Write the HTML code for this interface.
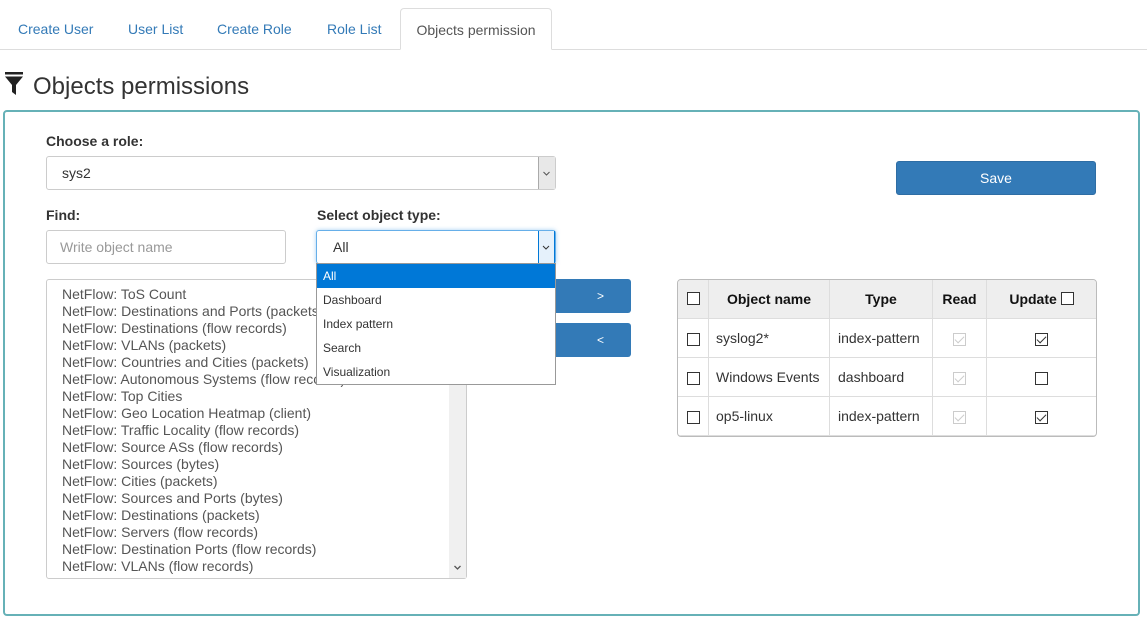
<!DOCTYPE html>
<html><head><style>
*{box-sizing:border-box;margin:0;padding:0}
body{width:1147px;height:623px;background:#fff;font-family:"Liberation Sans",Arial,sans-serif;font-size:14px;color:#333;position:relative;overflow:hidden}
.a{position:absolute}
.tab{position:absolute;top:21px;color:#337ab7;font-size:14px}
.lbl{position:absolute;font-weight:bold;font-size:14px;color:#333}
.cb{display:inline-block;width:13px;height:13px;border:1px solid #333;background:#fff;vertical-align:middle;position:relative}
.cb.g{border-color:#ccc}
.ck::after{content:"";position:absolute;left:3px;top:0px;width:4px;height:8px;border:solid #333;border-width:0 1px 1px 0;transform:rotate(45deg)}
.g.ck::after{border-color:#ccc}
table{border-collapse:collapse}
td,th{border:1px solid #ddd;height:39px;font-size:14px}
th{background:#eee;font-weight:bold;color:#111}
.list div{height:17px;line-height:17px}
.dd div{height:24px;line-height:24px;padding-left:6px;font-size:12px;color:#333}
</style></head><body>
<div class="a" style="left:0;top:49px;width:1147px;height:1px;background:#ddd"></div>
<div class="tab" style="left:18px">Create User</div>
<div class="tab" style="left:128px">User List</div>
<div class="tab" style="left:217px">Create Role</div>
<div class="tab" style="left:327px">Role List</div>
<div class="a" style="left:400px;top:8px;width:152px;height:42px;border:1px solid #ddd;border-bottom-color:#fff;border-radius:4px 4px 0 0;background:#fff;color:#555;text-align:center;line-height:42px">Objects permission</div>
<svg class="a" style="left:4px;top:72px" width="20" height="24" viewBox="0 0 20 24"><rect x="1" y="0" width="18" height="2.5" fill="#222"/><path d="M1 4.5H19L12 13V23L8 20V13Z" fill="#222"/></svg>
<div class="a" style="left:33px;top:73px;font-size:24px;color:#333">Objects permissions</div>
<div class="a" style="left:3px;top:110px;width:1137px;height:506px;border:2px solid #66b1b7;border-radius:4px"></div>
<div class="lbl" style="left:46px;top:133px">Choose a role:</div>
<div class="a" style="left:46px;top:156px;width:510px;height:34px;border:1px solid #ccc;border-radius:3px;padding-left:15px;line-height:32px">sys2</div>
<div class="a" style="left:538px;top:157px;width:17px;height:32px;background:#e8e8e8;border-left:1px solid #aaa"><svg width="16" height="32"><path d="M4.5 15l3 3 3-3" fill="none" stroke="#555" stroke-width="1"/></svg></div>
<div class="a" style="left:896px;top:161px;width:200px;height:34px;background:#337ab7;border:1px solid #2e6da4;border-radius:3px;color:#fff;text-align:center;line-height:32px">Save</div>
<div class="lbl" style="left:46px;top:207px">Find:</div>
<div class="lbl" style="left:317px;top:207px">Select object type:</div>
<div class="a" style="left:46px;top:230px;width:240px;height:34px;border:1px solid #ccc;border-radius:3px;padding-left:13px;line-height:32px;color:#999">Write object name</div>
<div class="a" style="left:316px;top:230px;width:240px;height:34px;border:1px solid #66afe9;border-radius:3px;padding-left:16px;line-height:32px;box-shadow:0 0 4px rgba(102,175,233,.6)">All</div>
<div class="a" style="left:538px;top:231px;width:17px;height:32px;background:#e5f1fb;border-left:1px solid #0078d7;border-right:1px solid #0078d7"><svg width="15" height="32"><path d="M4 15l3 3 3-3" fill="none" stroke="#333" stroke-width="1"/></svg></div>
<div class="a list" style="left:46px;top:279px;width:421px;height:300px;border:1px solid #ccc;border-radius:3px;padding:6px 0 0 15px;color:#555;overflow:hidden">
<div>NetFlow: ToS Count</div><div>NetFlow: Destinations and Ports (packets)</div><div>NetFlow: Destinations (flow records)</div><div>NetFlow: VLANs (packets)</div><div>NetFlow: Countries and Cities (packets)</div><div>NetFlow: Autonomous Systems (flow records)</div><div>NetFlow: Top Cities</div><div>NetFlow: Geo Location Heatmap (client)</div><div>NetFlow: Traffic Locality (flow records)</div><div>NetFlow: Source ASs (flow records)</div><div>NetFlow: Sources (bytes)</div><div>NetFlow: Cities (packets)</div><div>NetFlow: Sources and Ports (bytes)</div><div>NetFlow: Destinations (packets)</div><div>NetFlow: Servers (flow records)</div><div>NetFlow: Destination Ports (flow records)</div><div>NetFlow: VLANs (flow records)</div>
</div>
<div class="a" style="left:449px;top:280px;width:17px;height:298px;background:#f0f0f0"><svg class="a" style="left:0;top:282px" width="17" height="12"><path d="M5.5 4l3 3 3-3" fill="none" stroke="#555" stroke-width="1.3"/></svg></div>
<div class="a" style="left:540px;top:279px;width:91px;height:34px;background:#337ab7;border-radius:3px;color:#fff;text-align:center;line-height:34px;padding-left:30px;font-size:12px">&gt;</div>
<div class="a" style="left:540px;top:323px;width:91px;height:34px;background:#337ab7;border-radius:3px;color:#fff;text-align:center;line-height:34px;padding-left:30px;font-size:12px">&lt;</div>
<div class="a dd" style="left:316px;top:263px;width:240px;height:122px;border:1px solid #999;background:#fff">
<div style="background:#0078d7;color:#fff">All</div><div>Dashboard</div><div>Index pattern</div><div>Search</div><div>Visualization</div>
</div>
<div class="a" style="left:677px;top:279px;width:420px;height:158px;border:1px solid #bbb;border-radius:4px;overflow:hidden">
<table style="width:420px;margin:-1px">
<tr><th style="width:31px"><span class="cb" style="top:-2px"></span></th><th style="width:121px">Object name</th><th style="width:103px">Type</th><th style="width:54px">Read</th><th>Update <span class="cb" style="top:-2px"></span></th></tr>
<tr><td style="text-align:center"><span class="cb"></span></td><td style="padding-left:7px">syslog2*</td><td style="padding-left:8px">index-pattern</td><td style="text-align:center"><span class="cb g ck"></span></td><td style="text-align:center"><span class="cb ck"></span></td></tr>
<tr><td style="text-align:center"><span class="cb"></span></td><td style="padding-left:7px">Windows Events</td><td style="padding-left:8px">dashboard</td><td style="text-align:center"><span class="cb g ck"></span></td><td style="text-align:center"><span class="cb"></span></td></tr>
<tr><td style="text-align:center"><span class="cb"></span></td><td style="padding-left:7px">op5-linux</td><td style="padding-left:8px">index-pattern</td><td style="text-align:center"><span class="cb g ck"></span></td><td style="text-align:center"><span class="cb ck"></span></td></tr>
</table></div>
</body></html>
